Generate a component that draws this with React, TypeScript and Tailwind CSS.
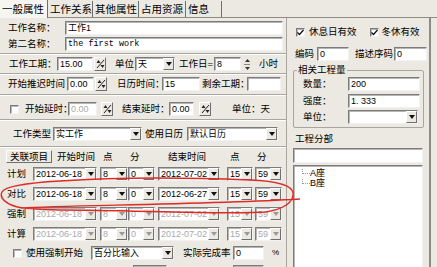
import React from 'react';

const sunk =
  'bg-white border border-t-[#7c7c7c] border-l-[#7c7c7c] border-b-[#f2f2f2] border-r-[#f2f2f2] shadow-[inset_1px_1px_0_#b5b5b5]';
const raised =
  'bg-[#ebe9e1] border border-t-[#ffffff] border-l-[#ffffff] border-b-[#6f6f6f] border-r-[#6f6f6f]';

function Arrow({ dim }: { dim?: boolean }) {
  return (
    <div className={`w-[11px] h-full flex items-center justify-center ${raised}`}>
      <svg width="6" height="4" viewBox="0 0 6 4">
        <path d="M0 0 H6 L3 4 Z" fill={dim ? '#9a9a9a' : '#111'} />
      </svg>
    </div>
  );
}

function Combo({ w, text, dim, ml = 0 }: { w: string; text: string; dim?: boolean; ml?: number }) {
  return (
    <div className={`${w} h-[14px] flex ${sunk}`} style={{ marginLeft: ml }}>
      <span className={`flex-1 pl-[2px] leading-[12px] text-[9px] overflow-hidden ${dim ? 'text-[#a9a9a9]' : ''}`}>{text}</span>
      <Arrow dim={dim} />
    </div>
  );
}

function Field({ w, text, dim, mono }: { w: string; text?: string; dim?: boolean; mono?: boolean }) {
  return (
    <div className={`${w} h-[14px] ${sunk} pl-[2px] leading-[12px] ${mono ? "font-['Liberation_Mono',monospace] text-[8.5px]" : 'text-[9px]'} ${dim ? 'text-[#a9a9a9]' : ''}`}>
      {text}
    </div>
  );
}

function SpinPic() {
  return (
    <div className={`w-[12px] h-[14px] flex items-center justify-center ${raised}`}>
      <svg width="9" height="10" viewBox="0 0 9 10">
        <path d="M1 9 L8 1" stroke="#222" strokeWidth="1" />
        <path d="M2.5 1 L0.5 4 H4.5 Z" fill="#222" />
        <path d="M6.5 9 L4.5 6 H8.5 Z" fill="#222" />
      </svg>
    </div>
  );
}

function UpDown() {
  return (
    <div className="w-[8px] h-[14px] flex flex-col items-center justify-center gap-[2px]">
      <svg width="5" height="3" viewBox="0 0 5 3"><path d="M0 3 L2.5 0 L5 3 Z" fill="#333" /></svg>
      <div className="w-[6px] h-px bg-[#888]" />
      <svg width="5" height="3" viewBox="0 0 5 3"><path d="M0 0 H5 L2.5 3 Z" fill="#333" /></svg>
    </div>
  );
}

function Check({ on }: { on?: boolean }) {
  return (
    <div className={`w-[9px] h-[9px] flex items-center justify-center ${sunk}`}>
      {on && (
        <svg width="7" height="7" viewBox="0 0 7 7">
          <path d="M0.5 3.5 L2.5 5.5 L6.5 1" stroke="#111" strokeWidth="1.3" fill="none" />
        </svg>
      )}
    </div>
  );
}

function Sep() {
  return <div className="h-[2px] border-t border-t-[#a8a69e] border-b border-b-white" />;
}

function Row({ label, i, dim }: { label: string; i: number; dim?: boolean }) {
  const r = [
    ['2012-06-18', '8', '0', '2012-07-02', '15', '59'],
    ['2012-06-18', '8', '0', '2012-06-27', '15', '59'],
    ['2012-06-18', '8', '0', '2012-07-02', '15', '59'],
    ['2012-06-18', '8', '0', '2012-07-02', '15', '59'],
  ][i];
  return (
    <div className="h-[14px] flex items-center pl-[7px]">
      <span className="w-[26px]">{label}</span>
      <Combo w="w-[64px]" text={r[0]} dim={dim} />
      <Combo w="w-[28px]" text={r[1]} dim={dim} ml={3} />
      <Combo w="w-[27px]" text={r[2]} dim={dim} />
      <Combo w="w-[62px]" text={r[3]} dim={dim} ml={3} />
      <Combo w="w-[26px]" text={r[4]} dim={dim} ml={7} />
      <Combo w="w-[27px]" text={r[5]} dim={dim} ml={2} />
    </div>
  );
}

export default function App() {
  return (
    <div className="w-[437px] h-[267px] overflow-hidden relative bg-[#ebe9e1] text-[9.5px] leading-none text-black whitespace-nowrap [&_*]:shrink-0 font-['Liberation_Sans','Noto_Sans_CJK_SC',sans-serif]">
      {/* tabs */}
      <div className="h-[18px] flex items-end border-b border-b-[#8d8b84]">
        <div className="h-[18px] w-[48px] bg-[#f6f5f1] border-r border-r-[#6f6f6f] flex items-center pl-[2px] text-[10.5px] -mb-px">一般属性</div>
        {['工作关系', '其他属性', '占用资源', '信息'].map((t, k) => (
          <div key={t} className={`h-[16px] ${['w-[45px]', 'w-[46px]', 'w-[47px]', 'w-[36px]'][k]} border-r border-r-[#6f6f6f] flex items-center pl-[2px] text-[10.5px]`}>{t}</div>
        ))}
      </div>

      <div className="flex h-[249px]">
        {/* left column */}
        <div className="w-[286px] flex flex-col">
          <div className="h-[13px] mt-[3px] flex items-center">
            <span className="w-[65px] pl-[8px]">工作名称：</span>
            <Field w="w-[218px] h-[13px]" text="工作1" />
          </div>
          <div className="h-[14px] mt-[3px] flex items-center">
            <span className="w-[65px] pl-[8px]">第二名称：</span>
            <Field w="w-[218px]" text="the first work" mono />
          </div>
          <div className="mt-[2px]"><Sep /></div>
          <div className="h-[14px] mt-[2px] flex items-center">
            <span className="w-[57px] pl-[9px]">工作工期：</span>
            <Field w="w-[36px]" text="15.00" />
            <div className="ml-[1px]"><SpinPic /></div>
            <span className="ml-[9px] w-[20px]">单位</span>
            <Combo w="w-[40px]" text="天" />
            <span className="ml-[4px] w-[35px]">工作日=</span>
            <Field w="w-[27px]" text="8" />
            <div className="ml-[2px]"><UpDown /></div>
            <span className="ml-[8px]">小时</span>
          </div>
          <div className="mt-[2px]"><Sep /></div>
          <div className="h-[14px] mt-[2px] flex items-center">
            <span className="w-[67px] pl-[8px]">开始推迟时间</span>
            <Field w="w-[27px]" text="0.00" />
            <div className="ml-[1px]"><SpinPic /></div>
            <span className="ml-[10px] w-[45px]">日历时间：</span>
            <Field w="w-[38px]" text="15" />
            <span className="ml-[2px] w-[45px]">剩余工期：</span>
            <Field w="w-[34px]" />
          </div>
          <div className="mt-[3px]"><Sep /></div>
          <div className="h-[14px] mt-[6px] flex items-center">
            <div className="ml-[10px]"><Check /></div>
            <span className="ml-[6px] w-[43px]">开始延时：</span>
            <Field w="w-[29px]" text="0.00" dim />
            <div className="ml-[4px]"><SpinPic /></div>
            <span className="ml-[9px] w-[47px]">结束延时：</span>
            <Field w="w-[25px]" text="0.00" />
            <div className="ml-[5px]"><SpinPic /></div>
            <span className="ml-[21px]">单位：天</span>
          </div>
          <div className="mt-[3px]"><Sep /></div>
          <div className="h-[13px] mt-[6px] flex items-center">
            <span className="w-[53px] pl-[13px]">工作类型</span>
            <Combo w="w-[89px]" text="实工作" />
            <span className="ml-[3px] w-[42px]">使用日历</span>
            <Combo w="w-[91px]" text="默认日历" />
          </div>
          <div className="mt-[6px]"><Sep /></div>
          <div className="h-[13px] mt-[2px] flex items-center">
            <div className={`ml-[6px] w-[46px] h-[13px] flex items-center justify-center ${raised}`}>关联项目</div>
            <span className="ml-[5px] w-[46px]">开始时间</span>
            <span className="w-[27px]">点</span>
            <span className="w-[38px]">分</span>
            <span className="w-[62px]">结束时间</span>
            <span className="w-[27px]">点</span>
            <span>分</span>
          </div>
          <div className="flex flex-col gap-[6px] mt-[4px]">
            <Row label="计划" i={0} />
            <Row label="对比" i={1} />
            <Row label="强制" i={2} dim />
            <Row label="计算" i={3} dim />
          </div>
          <div className="h-[14px] mt-[5px] flex items-center">
            <div className="ml-[13px]"><Check /></div>
            <span className="ml-[4px] w-[65px]">使用强制开始</span>
            <Combo w="w-[83px]" text="百分比输入" />
            <span className="ml-[9px] w-[50px]">实际完成率</span>
            <Field w="w-[31px]" text="0" />
            <span className="ml-[8px] text-[8px]">%</span>
          </div>
          <div className="h-[14px] mt-[5px] flex items-center">
            <Field w="ml-[133px] w-[34px]" />
            <Field w="ml-[66px] w-[31px]" />
          </div>
        </div>

        {/* right column */}
        <div className="w-[145px] border-l border-l-[#a8a69e] border-r-2 border-r-[#8d8b84] flex flex-col pl-[6px] pr-[5px]">
          <div className="h-[10px] mt-[9px] flex items-center">
            <div className="ml-[3px]"><Check on /></div>
            <span className="ml-[4px]">休息日有效</span>
            <div className="ml-[13px]"><Check on /></div>
            <span className="ml-[3px]">冬休有效</span>
          </div>
          <div className="h-[13px] mt-[10px] flex items-center">
            <span className="ml-[2px] w-[22px]">编码</span>
            <Field w="w-[32px] h-[13px]" text="0" />
            <span className="ml-[6px] w-[39px]">描述序码</span>
            <Field w="w-[33px] h-[13px]" text="0" />
          </div>
          <div className="relative mt-[10px] h-[58px] border border-[#a8a69e] rounded-[2px] pt-[7px]">
            <span className="absolute -top-[6px] left-[3px] bg-[#ebe9e1] px-[1px]">相关工程量</span>
            <div className="h-[12px] flex items-center">
              <span className="ml-[9px] w-[45px]">数量：</span>
              <Field w="w-[72px] h-[12px]" text="200" />
            </div>
            <div className="h-[12px] mt-[5px] flex items-center">
              <span className="ml-[9px] w-[45px]">强度：</span>
              <Field w="w-[72px] h-[12px]" text="1. 333" />
            </div>
            <div className="h-[14px] mt-[3px] flex items-center">
              <span className="ml-[9px] w-[45px]">单位：</span>
              <Combo w="w-[70px]" text="" />
            </div>
          </div>
          <span className="mt-[6px] ml-[2px]">工程分部</span>
          <div className={`mt-[4px] h-[15px] w-[130px] ${sunk}`} />
          <div className={`mt-[2px] h-[110px] w-[130px] ${sunk} pt-[3px] pl-[8px]`}>
            <div className="flex items-center h-[10px]">
              <div className="w-[8px] h-[5px] border-l border-b border-dotted border-[#999] -mt-[4px]" />
              <span className="text-[9px]">A座</span>
            </div>
            <div className="flex items-center h-[10px]">
              <div className="w-[8px] h-[5px] border-l border-b border-dotted border-[#999] -mt-[4px]" />
              <span className="text-[9px]">B座</span>
            </div>
          </div>
        </div>
      </div>

      {/* red hand-drawn annotation */}
      <svg className="absolute inset-0 pointer-events-none" width="437" height="267" viewBox="0 0 437 267">
        <path
          d="M22 208 C6 205 -1 198 2 192 C5 186 25 183 60 181 C120 177 200 178 250 180 C276 181 292 185 293 193 C294 202 284 209 266 212 C225 215 130 210 60 210 C35 210 18 207 22 208 C60 205 200 205 300 199"
          stroke="#df2a25"
          strokeWidth="1.4"
          fill="none"
        />
      </svg>
    </div>
  );
}
